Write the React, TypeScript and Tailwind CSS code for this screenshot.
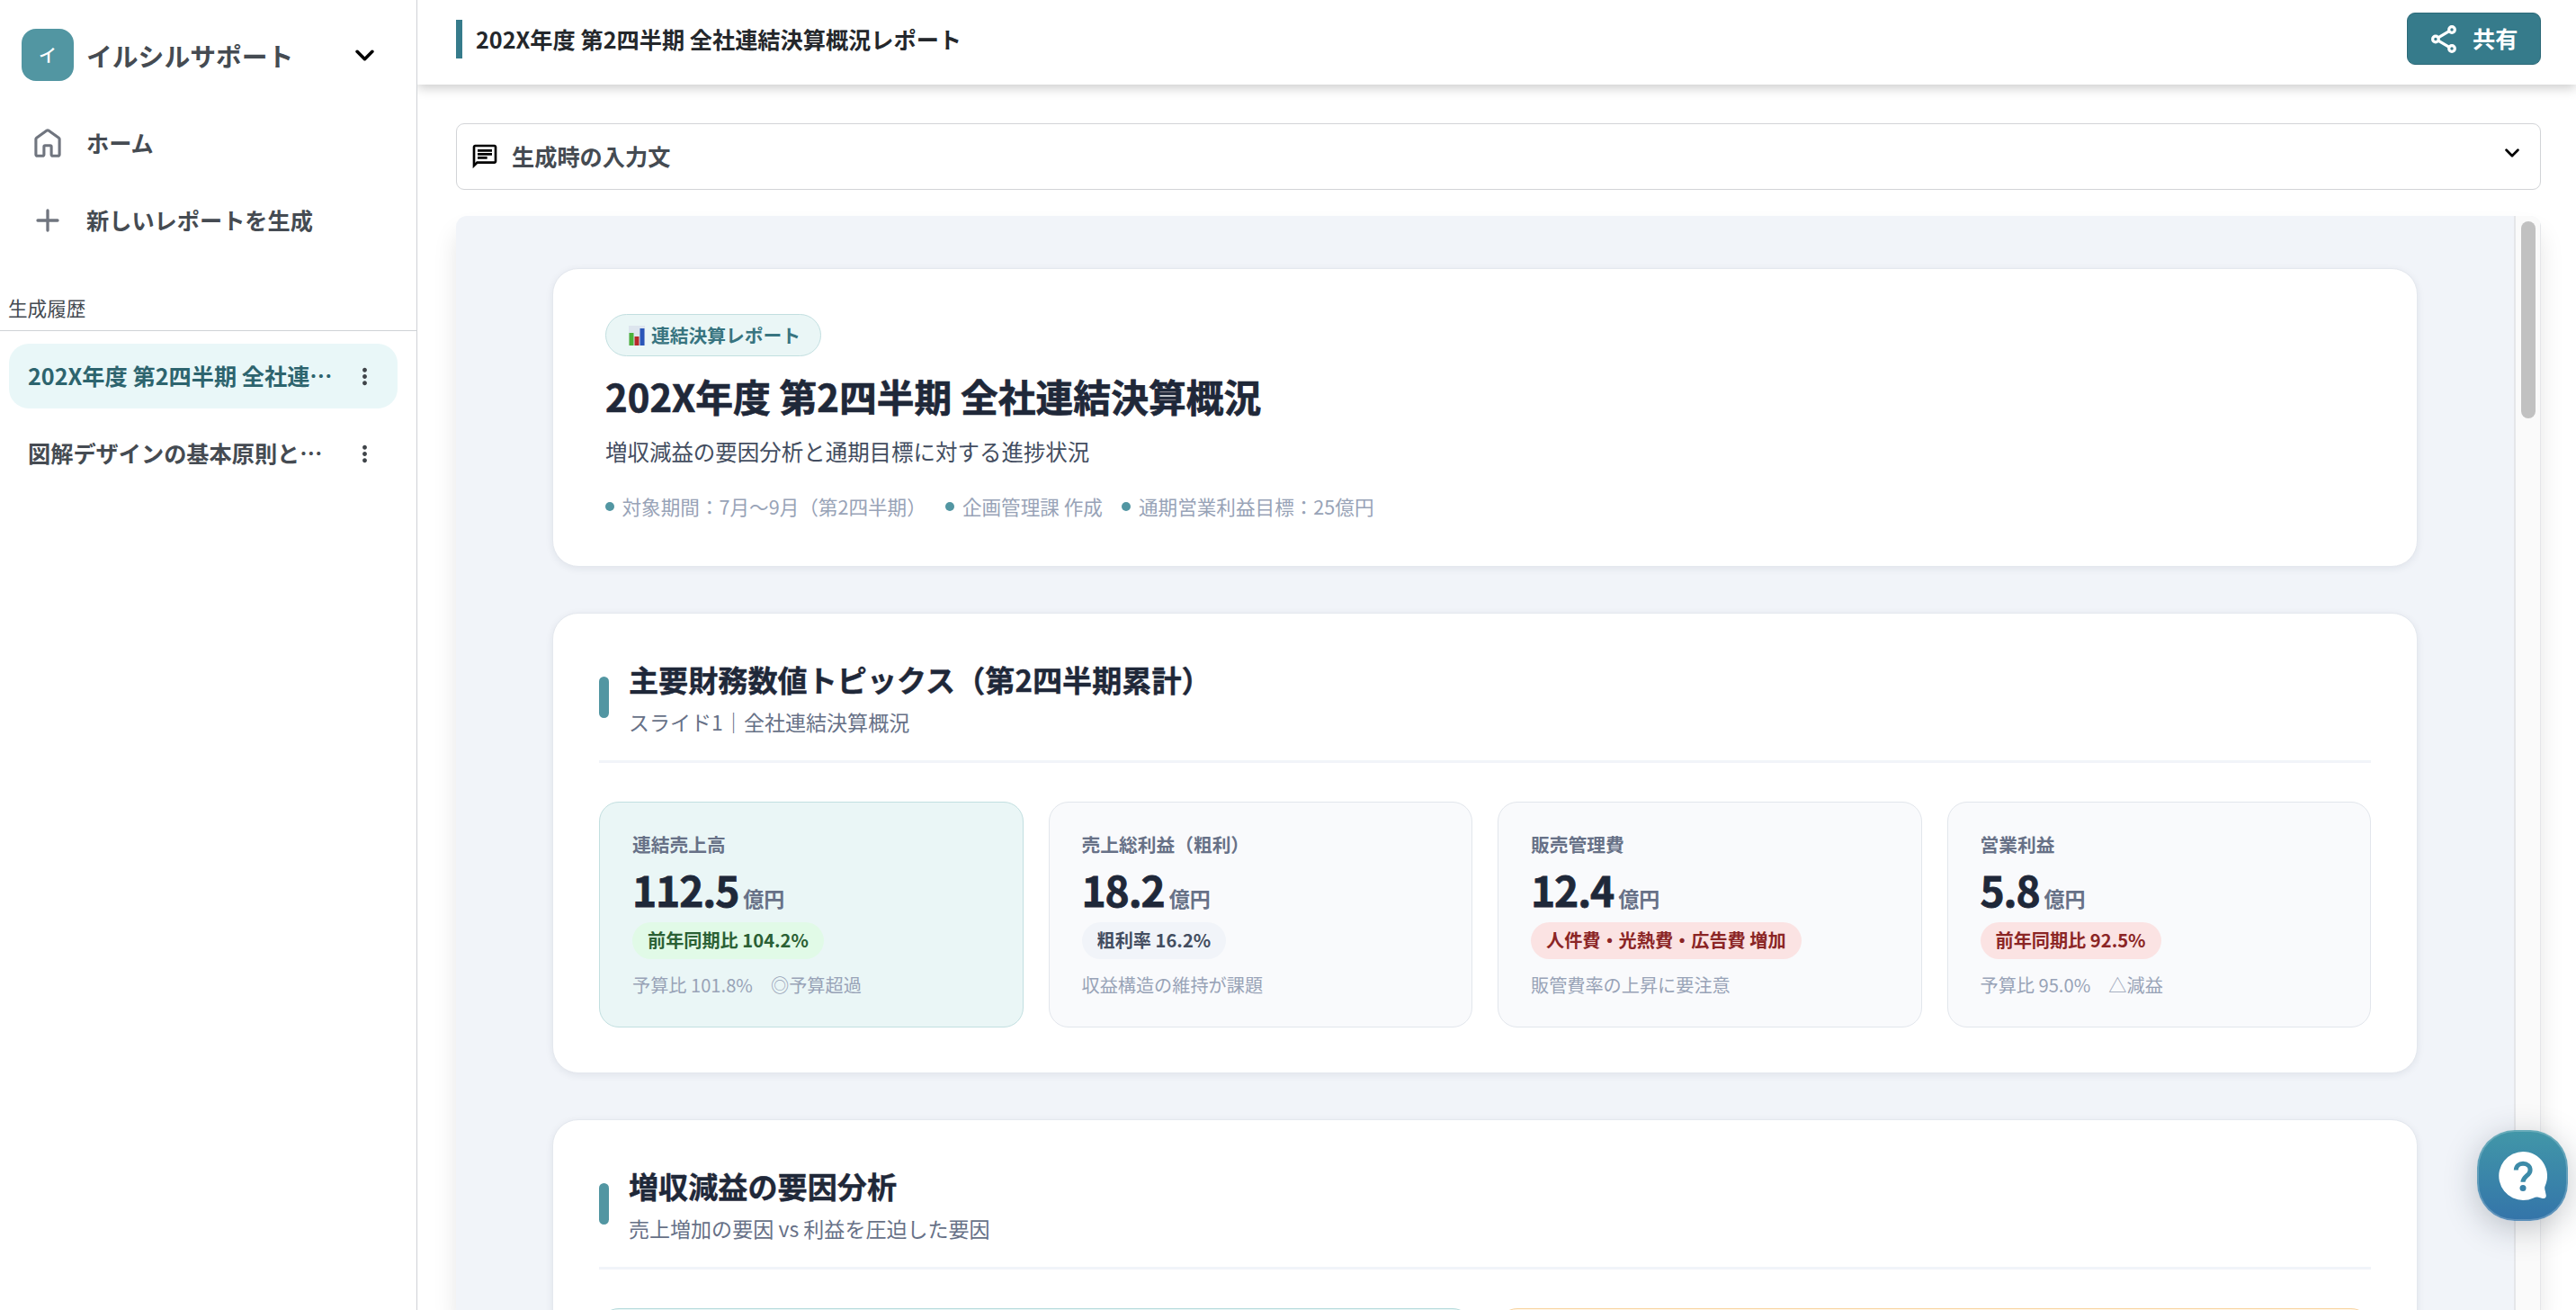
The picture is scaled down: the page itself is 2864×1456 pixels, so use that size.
import type { ReactNode } from "react";
import clsx from "clsx";
import { MdMoreVert, MdOutlineChat } from "react-icons/md";

type Tone = "good" | "neutral" | "bad"

const histories = [
  { text: '202X年度 第2四半期 全社連…', active: true },
  { text: '図解デザインの基本原則と…', active: false },
]

const metas = ['対象期間：7月〜9月（第2四半期）', '企画管理課 作成', '通期営業利益目標：25億円']

const kpis: { label: string, value: string, chip: string, note: string, tone: Tone, highlight?: boolean }[] = [
  { label: '連結売上高', value: '112.5', chip: '前年同期比 104.2%', note: '予算比 101.8%　◎予算超過', tone: 'good', highlight: true },
  { label: '売上総利益（粗利）', value: '18.2', chip: '粗利率 16.2%', note: '収益構造の維持が課題', tone: 'neutral' },
  { label: '販売管理費', value: '12.4', chip: '人件費・光熱費・広告費 増加', note: '販管費率の上昇に要注意', tone: 'bad' },
  { label: '営業利益', value: '5.8', chip: '前年同期比 92.5%', note: '予算比 95.0%　△減益', tone: 'bad' },
]

const chipTones: Record<Tone, string> = {
  good: 'bg-[#e1fae7] text-[#2a6034]',
  neutral: 'bg-[#f1f4f9] text-[#434d60]',
  bad: 'bg-[#fbe3e3] text-[#8b2525]',
}

const Chevron = ({ className }: { className: string }) => (
  <svg viewBox="0 0 20 12" className={className} fill="none" stroke="currentColor" strokeWidth="3.4" strokeLinecap="round" strokeLinejoin="round">
    <path d="M2 2l8 8 8-8" />
  </svg>
)

const HomeIcon = () => (
  <svg viewBox="0 0 30 32" className="w-[30px] h-8" fill="none" stroke="currentColor" strokeWidth="3.1" strokeLinejoin="round">
    <path d="M1.9 11.6q0-.9.7-1.4L14.1 2.1q.9-.6 1.8 0L27.4 10.2q.7.5.7 1.4v17.2a1.5 1.5 0 0 1-1.5 1.5h-6a1.5 1.5 0 0 1-1.5-1.5V20a1.2 1.2 0 0 0-1.2-1.2h-5.8a1.2 1.2 0 0 0-1.2 1.2v8.8a1.5 1.5 0 0 1-1.5 1.5h-6a1.5 1.5 0 0 1-1.5-1.5z" />
  </svg>
)

const PlusIcon = () => (
  <svg viewBox="0 0 26 26" className="w-[26px] h-[26px]" fill="none" stroke="currentColor" strokeWidth="3.3" strokeLinecap="round">
    <path d="M13 2v22M2 13h22" />
  </svg>
)

const ShareIcon = () => (
  <svg viewBox="0 0 28 31" className="w-7 h-[31px]" fill="none" stroke="currentColor" strokeWidth="3.2">
    <circle cx="4.9" cy="15.5" r="3.3" />
    <circle cx="23" cy="5" r="3.3" />
    <circle cx="23" cy="26" r="3.3" />
    <path d="M7.8 13.8 20 6.7M7.8 17.2 20 24.3" />
  </svg>
)

const BarChartIcon = () => (
  <svg viewBox="0 0 18 22" className="w-[18px] h-[22px]">
    <rect width="18" height="22" fill="#dde5ee" />
    <rect x="0.5" y="8" width="5" height="14" fill="#4bb13a" />
    <rect x="6.5" y="12" width="5" height="10" fill="#b8282a" />
    <rect x="12.5" y="3" width="5" height="19" fill="#2a56b8" />
  </svg>
)

const Sidebar = () => {
  return (
    <aside className="relative z-10 w-[464px] shrink-0 h-full bg-white border-r border-[#cfd2d6] flex flex-col text-[#454b52]">
      <div className="flex items-center pt-8 pl-6 pr-[47px]">
        <div className="size-[58px] rounded-2xl bg-[#5296a2] text-white text-[20px] font-medium flex items-center justify-center">イ</div>
        <span className="ml-3.5 mt-0.5 text-[28.8px] leading-none font-bold">イルシルサポート</span>
        <Chevron className="w-[21px] h-[13px] ml-auto text-black" />
      </div>

      <nav className="flex flex-col mt-[26px] text-[25.2px] font-bold">
        <a className="h-[86px] flex items-center pl-[38px]">
          <span className="w-[30px] mr-7 flex justify-center text-[#70757f]"><HomeIcon /></span>ホーム
        </a>
        <a className="h-[86px] flex items-center pl-[38px]">
          <span className="w-[30px] mr-7 flex justify-center text-[#70757f]"><PlusIcon /></span>新しいレポートを生成
        </a>
      </nav>

      <div className="mt-9 h-[44px] pl-[9px] text-[21.6px] leading-[35px] border-b border-[#cfd2d6]">生成履歴</div>

      <ul className="flex flex-col gap-3.5 mt-3.5 pl-[10px] pr-[21px]">
        {histories.map((item) => (
          <li key={item.text} className={clsx('h-[72px] rounded-[22px] flex items-center justify-between pl-[21px] pr-[22px] text-[25.2px] font-bold whitespace-nowrap', item.active && 'bg-[#e9f7f8] text-[#2d646e]')}>
            <span>{item.text}</span>
            <MdMoreVert size={29} className="text-[#3f4449]" />
          </li>
        ))}
      </ul>
    </aside>
  )
}

const Header = () => {
  return (
    <header className="h-[94px] shrink-0 flex items-start justify-between pl-[43px] pr-[39px] shadow-[0_4px_12px_rgba(0,0,0,0.2)]">
      <div className="mt-[22px] h-[43px] flex items-center border-l-[7px] border-[#367b8b] pl-[15px]">
        <h1 className="text-[25.2px] leading-none font-bold text-[#24272b]">202X年度 第2四半期 全社連結決算概況レポート</h1>
      </div>
      <button className="mt-3.5 w-[149px] h-[58px] rounded-[9px] bg-[#367b8b] border border-[#2d6a78] text-white flex items-center pl-[26px] text-[25.2px] font-bold">
        <ShareIcon />
        <span className="ml-[18px]">共有</span>
      </button>
    </header>
  )
}

const Card = ({ className, children }: { className: string, children: ReactNode }) => (
  <section className={clsx('shrink-0 bg-white border border-[#e4e8ee] rounded-[29px] shadow-[0_2px_8px_rgba(30,41,59,0.08)]', className)}>{children}</section>
)

const SectionHeading = ({ title, sub }: { title: string, sub: string }) => (
  <div className="flex items-center pb-[27px] border-b-[3px] border-[#f1f4f9]">
    <span className="w-[11px] h-[46px] rounded-full bg-[#5296a2]" />
    <div className="ml-[22px]">
      <h2 className="text-[33.12px] leading-[47px] font-bold text-[#1f2839] [-webkit-text-stroke:0.4px]">{title}</h2>
      <p className="mt-[7px] text-[23.04px] leading-8 text-[#677187]">{sub}</p>
    </div>
  </div>
)

const Report = () => {
  return (
    <div className="flex-1 flex flex-col gap-[51px] pt-[58px] px-[107px] overflow-hidden">
      <Card className="h-[332px] pl-[58px] pt-[50px]">
        <div className="w-[240px] h-[47px] rounded-full border border-[#c2dfe0] bg-[#eaf6f6] flex items-center pl-[25px] text-[20.74px] font-bold text-[#387480] whitespace-nowrap">
          <span className="mr-[7px]"><BarChartIcon /></span>連結決算レポート
        </div>
        <h2 className="mt-[15px] text-[41.76px] leading-[58px] font-bold text-[#1f2839] tracking-[0.06px] [-webkit-text-stroke:0.7px]">202X年度 第2四半期 全社連結決算概況</h2>
        <p className="mt-3 text-[24.48px] leading-[42px] text-[#434d60]">増収減益の要因分析と通期目標に対する進捗状況</p>
        <div className="mt-[22px] flex gap-[21.6px] text-[21.6px] leading-9 text-[#98a3b7]">
          {metas.map((text) => (
            <span key={text} className="flex items-center gap-[8.5px]">
              <i className="size-2.5 rounded-full bg-[#5296a2]" />{text}
            </span>
          ))}
        </div>
      </Card>

      <Card className="h-[512px] px-[51px] pt-[50px]">
        <SectionHeading title="主要財務数値トピックス（第2四半期累計）" sub="スライド1｜全社連結決算概況" />
        <div className="grid grid-cols-4 gap-7 mt-[43px]">
          {kpis.map((kpi) => (
            <div key={kpi.label} className={clsx('h-[251px] rounded-[22px] border pt-[31px] pl-9 flex flex-col items-start', kpi.highlight ? 'bg-[#eaf6f6] border-[#c2dfe0]' : 'bg-[#f9fafc] border-[#e2e6ec]')}>
              <span className="text-[20.74px] leading-[30px] font-bold text-[#677187]">{kpi.label}</span>
              <div className="mt-3 h-[46px] flex items-baseline text-[46.08px] leading-[46px] tracking-[-1.1px] font-bold text-[#1f2839] [-webkit-text-stroke:0.8px]">
                {kpi.value}<span className="ml-[5px] text-[23.04px] leading-none tracking-normal text-[#677187] [-webkit-text-stroke:0px]">億円</span>
              </div>
              <span className={clsx('mt-3.5 h-[41px] px-[17px] rounded-full text-[20.16px] leading-10 font-bold', chipTones[kpi.tone])}>{kpi.chip}</span>
              <span className="mt-3.5 text-[20.16px] leading-[30px] text-[#98a3b7] whitespace-pre">{kpi.note}</span>
            </div>
          ))}
        </div>
      </Card>

      <Card className="h-[600px] px-[51px] pt-[50px]">
        <SectionHeading title="増収減益の要因分析" sub="売上増加の要因 vs 利益を圧迫した要因" />
        <div className="grid grid-cols-2 gap-7 mt-[43px]">
          <div className="h-[300px] rounded-[22px] border border-[#b5dadb] bg-[#eaf6f6]" />
          <div className="h-[300px] rounded-[22px] border border-[#f8d3a0] bg-[#fff7ea]" />
        </div>
      </Card>
    </div>
  )
}

const HelpButton = () => (
  <button className="absolute right-[9px] top-[1256px] size-[101px] rounded-[42px] border-2 border-white/20 bg-linear-to-b from-[#4297a8] to-[#3474a9] bg-origin-border shadow-[0_8px_36px_rgba(30,41,59,0.26)] flex items-center justify-center">
    <svg viewBox="0 0 54 54" className="size-[54px]">
      <path fill="#fff" d="M27 0a27 27 0 0 1 24.6 38.2c-.7 1.8-.4 3.4.1 5.2l1 4.8c.5 2.6-1.3 4.3-3.8 3.7l-4.6-1.1c-2.1-.5-3.7-.3-5.5.6A27 27 0 1 1 27 0z" />
      <path fill="none" stroke="#3d8ba8" strokeWidth="5" strokeLinejoin="round" d="M19.3 20.5c0-4.3 3.2-7.2 7.8-7.2 4.7 0 8 2.9 8 7.1 0 6.3-8.1 6.800-8.100 13.400" />
      <circle cx="27" cy="40.5" r="3.5" fill="#3a83a8" />
    </svg>
  </button>
)

const App = () => {
  return (
    <div lang="ja" className="relative flex w-full h-screen overflow-hidden bg-white font-['Noto_Sans_CJK_JP',sans-serif]">
      <Sidebar />

      <div className="flex-1 min-w-0 flex flex-col">
        <Header />
        <main className="flex-1 min-h-0 flex flex-col pl-[43px] pr-[39px] pt-[43px]">
          <div className="h-[74px] shrink-0 rounded-[9px] border border-[#d2d4d7] flex items-center pl-[15px] pr-[23px] text-[#454b52]">
            <MdOutlineChat size={32} className="text-black" />
            <span className="ml-[14px] text-[25.2px] leading-none font-bold">生成時の入力文</span>
            <Chevron className="w-[16px] h-[10px] ml-auto mb-2 text-black" />
          </div>

          <div className="flex-1 min-h-0 mt-[29px] flex rounded-t-[12px] bg-[#f1f4f9] shadow-[0_18px_27px_rgba(0,0,0,0.1)] overflow-hidden">
            <Report />
            <div className="w-[30px] border-l-2 border-r border-[#e5e6e9] bg-[#fafafa] flex justify-center pt-1.5">
              <div className="w-4 h-[219px] rounded-full bg-[#c1c1c1]" />
            </div>
          </div>
        </main>
      </div>

      <HelpButton />
    </div>
  )
}

export default App
